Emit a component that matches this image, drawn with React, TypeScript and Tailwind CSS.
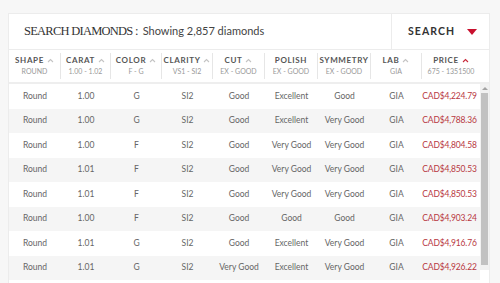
import React from 'react';

interface Column {
  label: string;
  sub: string;
  arrow: boolean;
  active?: boolean;
}

const columns: Column[] = [
  { label: 'SHAPE', sub: 'ROUND', arrow: true },
  { label: 'CARAT', sub: '1.00 - 1.02', arrow: true },
  { label: 'COLOR', sub: 'F - G', arrow: true },
  { label: 'CLARITY', sub: 'VS1 - SI2', arrow: true },
  { label: 'CUT', sub: 'EX - GOOD', arrow: true },
  { label: 'POLISH', sub: 'EX - GOOD', arrow: false },
  { label: 'SYMMETRY', sub: 'EX - GOOD', arrow: false },
  { label: 'LAB', sub: 'GIA', arrow: true },
  { label: 'PRICE', sub: '675 - 1351500', arrow: true, active: true },
];

const rows = [
  ['Round', '1.00', 'G', 'SI2', 'Good', 'Excellent', 'Good', 'GIA', 'CAD$4,224.79'],
  ['Round', '1.00', 'G', 'SI2', 'Good', 'Excellent', 'Very Good', 'GIA', 'CAD$4,788.36'],
  ['Round', '1.00', 'F', 'SI2', 'Good', 'Very Good', 'Very Good', 'GIA', 'CAD$4,804.58'],
  ['Round', '1.01', 'F', 'SI2', 'Good', 'Very Good', 'Very Good', 'GIA', 'CAD$4,850.53'],
  ['Round', '1.01', 'F', 'SI2', 'Good', 'Very Good', 'Very Good', 'GIA', 'CAD$4,850.53'],
  ['Round', '1.00', 'F', 'SI2', 'Good', 'Good', 'Good', 'GIA', 'CAD$4,903.24'],
  ['Round', '1.01', 'G', 'SI2', 'Good', 'Excellent', 'Very Good', 'GIA', 'CAD$4,916.76'],
  ['Round', '1.01', 'G', 'SI2', 'Very Good', 'Excellent', 'Very Good', 'GIA', 'CAD$4,926.22'],
];

const grid = 'grid grid-cols-[52px_50px_51px_51px_52px_53px_53px_51px_58px]';

const Caret = ({ red }: { red?: boolean }) => (
  <svg width="7" height="5" viewBox="0 0 7 5" className="ml-[3px]" aria-hidden="true">
    <path d="M1 4 L3.5 1.5 L6 4" fill="none" stroke={red ? '#c8283a' : '#c4c4c4'} strokeWidth="1.1" />
  </svg>
);

export default function App() {
  return (
    <div className="w-[500px] h-[283px] overflow-hidden bg-[#f7f7f7] pt-[13px] pl-[8px] font-['Lato',sans-serif]">
      <div className="w-[482px] h-[300px] bg-white border-l border-t border-r border-[#ececec]">
        {/* search bar */}
        <div className="flex h-[36px] border-b border-[#ececec]">
          <div className="flex items-center w-[383px] border-r border-[#ececec] pl-[15px]">
            <span className="font-['Liberation_Serif',serif] text-[12.5px] tracking-[-0.06em] text-[#333]">
              SEARCH DIAMONDS :
            </span>
            <span className="ml-[5px] text-[11px] text-[#444]">Showing 2,857 diamonds</span>
          </div>
          <div className="flex flex-1 items-center pl-[16px]">
            <span className="text-[10.5px] font-bold tracking-[0.1em] text-[#333]">SEARCH</span>
            <svg width="10" height="6" viewBox="0 0 10 6" className="ml-[12px]" aria-hidden="true">
              <path d="M0 0 H10 L5 6 Z" fill="#c8102e" />
            </svg>
          </div>
        </div>

        {/* column headers */}
        <div className={`${grid} h-[34px] border-b-2 border-[#eeeeee]`}>
          {columns.map((col, i) => (
            <div key={col.label} className="flex items-center justify-center">
              <div
                className={`flex flex-col items-center w-full ${i < columns.length - 1 ? 'border-r border-[#e6e6e6]' : ''} py-[2px]`}
              >
                <div className="flex items-center text-[8px] font-bold tracking-[0.08em] text-[#555] leading-[11px]">
                  {col.label}
                  {col.arrow && <Caret red={col.active} />}
                </div>
                <div className="text-[7px] text-[#999] leading-[11px]">{col.sub}</div>
              </div>
            </div>
          ))}
        </div>

        {/* body */}
        <div className="flex">
          <div className="w-[471px]">
            {rows.map((r, i) => (
              <div key={i} className={`${grid} h-[24.5px] ${i % 2 === 1 ? 'bg-[#f5f5f5]' : 'bg-white'}`}>
                {r.map((cell, j) => (
                  <div
                    key={j}
                    className={`flex items-center justify-center text-[8.5px] whitespace-nowrap ${j === 8 ? 'text-[#b8383f] tracking-[-0.02em] pr-[3px]' : 'text-[#666]'}`}
                  >
                    {cell}
                  </div>
                ))}
              </div>
            ))}
          </div>
          <div className="w-[9px] h-[186px] bg-[#f1f1f1] flex flex-col items-center">
            <svg width="6" height="5" viewBox="0 0 6 5" className="mt-[2px]" aria-hidden="true">
              <path d="M0 4 L3 1 L6 4 Z" fill="#a3a3a3" />
            </svg>
            <div className="mt-[2px] w-[7px] h-[172px] bg-[#c1c1c1]" />
          </div>
        </div>
      </div>
    </div>
  );
}
